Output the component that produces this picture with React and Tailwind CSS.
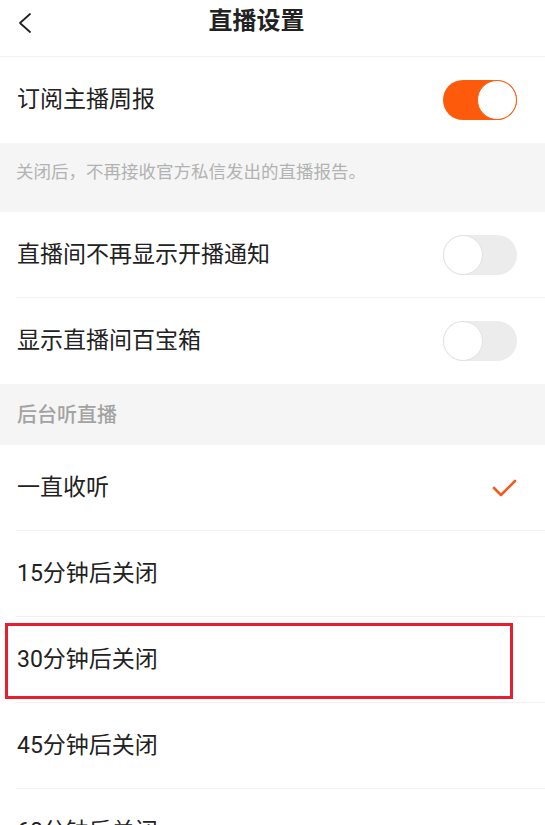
import React, { useState } from "react";

const FONT = { fontFamily: 'Roboto, "Noto Sans CJK SC", sans-serif' };

function Toggle({ on, onChange }) {
  return (
    <button
      onClick={onChange}
      className={`relative w-[74px] h-[40px] rounded-full shrink-0 ${on ? "bg-[#fd5a0c]" : "bg-[#ececec]"}`}
    >
      <span
        className={`absolute top-0 w-[40px] h-[40px] rounded-full bg-white border ${
          on ? "right-0 border-[#fd5a0c]" : "left-0 border-[#e2e2e2]"
        }`}
      />
    </button>
  );
}

function Row({ label, right, divider = true, children }) {
  return (
    <div className="relative h-[86px] flex items-center justify-between pl-[17px] pr-[28px] bg-white">
      <span className="text-[23px] text-[#222]">{label}</span>
      {right}
      {divider && <div className="absolute bottom-0 left-[16px] right-0 h-px bg-[#f1f1f1]" />}
      {children}
    </div>
  );
}

export default function App() {
  const [weekly, setWeekly] = useState(true);
  const [noNotice, setNoNotice] = useState(false);
  const [treasure, setTreasure] = useState(false);
  const [listen, setListen] = useState(0);

  const options = ["一直收听", "15分钟后关闭", "30分钟后关闭", "45分钟后关闭", "60分钟后关闭"];

  return (
    <div className="w-[545px] h-[825px] overflow-hidden bg-white" style={FONT}>
      {/* 顶部标题栏 */}
      <div className="relative h-[57px] flex items-center justify-center pr-[32px] border-b border-[#f2f2f2]">
        <button className="absolute left-[14px] top-[11px] p-0">
          <svg width="22" height="24" viewBox="0 0 22 24" fill="none" stroke="#222" strokeWidth="1.8" strokeLinecap="round" strokeLinejoin="round">
            <path d="M16 3 L6 12 L16 21" />
          </svg>
        </button>
        <span className="text-[24px] font-bold text-[#222] -mt-[14px]">直播设置</span>
      </div>

      <Row label="订阅主播周报" divider={false} right={<Toggle on={weekly} onChange={() => setWeekly(!weekly)} />} />

      <div className="h-[69px] bg-[#f5f5f5] pl-[16px] pt-[16px]">
        <span className="text-[17.5px] text-[#b2b2b2]">关闭后，不再接收官方私信发出的直播报告。</span>
      </div>

      <Row label="直播间不再显示开播通知" right={<Toggle on={noNotice} onChange={() => setNoNotice(!noNotice)} />} />
      <Row label="显示直播间百宝箱" divider={false} right={<Toggle on={treasure} onChange={() => setTreasure(!treasure)} />} />

      <div className="h-[61px] bg-[#f5f5f5] pl-[17px] flex items-center">
        <span className="text-[20px] font-medium text-[#a3a3a3]">后台听直播</span>
      </div>

      {options.map((opt, i) => (
        <div key={opt} onClick={() => setListen(i)} className="cursor-pointer">
          <Row
            label={opt}
            right={
              listen === i ? (
                <svg width="25" height="20" viewBox="0 0 25 20" fill="none" stroke="#f25a1e" strokeWidth="2.6" strokeLinecap="round" strokeLinejoin="round">
                  <path d="M2 10 L9 17 L23 3" />
                </svg>
              ) : null
            }
          >
            {/* 红框标注 */}
            {i === 2 && (
              <div className="absolute left-[5px] top-[6px] w-[508px] h-[76px] border-[3px] border-[#e5202e] pointer-events-none" />
            )}
          </Row>
        </div>
      ))}
    </div>
  );
}
